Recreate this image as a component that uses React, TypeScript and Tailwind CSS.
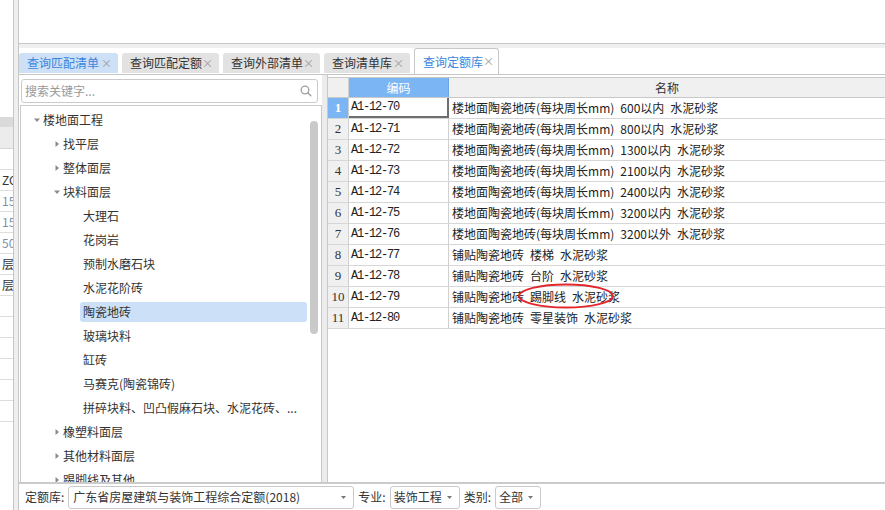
import React from "react";

const treeRows: { label: string; level: number; arrow?: "down" | "right"; selected?: boolean }[] = [
  { label: "楼地面工程", level: 0, arrow: "down" },
  { label: "找平层", level: 1, arrow: "right" },
  { label: "整体面层", level: 1, arrow: "right" },
  { label: "块料面层", level: 1, arrow: "down" },
  { label: "大理石", level: 2 },
  { label: "花岗岩", level: 2 },
  { label: "预制水磨石块", level: 2 },
  { label: "水泥花阶砖", level: 2 },
  { label: "陶瓷地砖", level: 2, selected: true },
  { label: "玻璃块料", level: 2 },
  { label: "缸砖", level: 2 },
  { label: "马赛克(陶瓷锦砖)", level: 2 },
  { label: "拼碎块料、凹凸假麻石块、水泥花砖、...", level: 2 },
  { label: "橡塑料面层", level: 1, arrow: "right" },
  { label: "其他材料面层", level: 1, arrow: "right" },
  { label: "踢脚线及其他", level: 1, arrow: "right" },
];

const gridRows: [string, string][] = [
  ["A1-12-70", "楼地面陶瓷地砖(每块周长mm)\u2002600以内\u2002水泥砂浆"],
  ["A1-12-71", "楼地面陶瓷地砖(每块周长mm)\u2002800以内\u2002水泥砂浆"],
  ["A1-12-72", "楼地面陶瓷地砖(每块周长mm)\u20021300以内\u2002水泥砂浆"],
  ["A1-12-73", "楼地面陶瓷地砖(每块周长mm)\u20022100以内\u2002水泥砂浆"],
  ["A1-12-74", "楼地面陶瓷地砖(每块周长mm)\u20022400以内\u2002水泥砂浆"],
  ["A1-12-75", "楼地面陶瓷地砖(每块周长mm)\u20023200以内\u2002水泥砂浆"],
  ["A1-12-76", "楼地面陶瓷地砖(每块周长mm)\u20023200以外\u2002水泥砂浆"],
  ["A1-12-77", "铺贴陶瓷地砖\u2002楼梯\u2002水泥砂浆"],
  ["A1-12-78", "铺贴陶瓷地砖\u2002台阶\u2002水泥砂浆"],
  ["A1-12-79", "铺贴陶瓷地砖\u2002踢脚线\u2002水泥砂浆"],
  ["A1-12-80", "铺贴陶瓷地砖\u2002零星装饰\u2002水泥砂浆"],
];

function Arrow({ dir }: { dir: "down" | "right" }) {
  return dir === "down" ? (
    <svg width="8" height="8" viewBox="0 0 8 8">
      <path d="M1 2.5 L7 2.5 L4 6 Z" fill="#8a8a8a" />
    </svg>
  ) : (
    <svg width="8" height="8" viewBox="0 0 8 8">
      <path d="M2.5 1 L6 4 L2.5 7 Z" fill="#8a8a8a" />
    </svg>
  );
}

function Caret() {
  return (
    <svg width="7" height="5" viewBox="0 0 7 5">
      <path d="M1 1 L6 1 L3.5 4 Z" fill="#777" />
    </svg>
  );
}

function Tab({
  label,
  w,
  variant,
}: {
  label: string;
  w: string;
  variant: "blue" | "gray" | "active";
}) {
  const cls =
    variant === "active"
      ? "h-[26px] bg-white border border-b-0 border-[#c8c8c8] text-[#3a86de]"
      : variant === "blue"
      ? "h-[20px] bg-[#cde0f6] text-[#3a86de]"
      : "h-[20px] bg-[#e2e2e2] text-[#333]";
  return (
    <div
      className={`${w} ${cls} shrink-0 whitespace-nowrap rounded-t-[3px] flex items-center justify-between pl-[8px] pr-[6px] text-[12px]`}
    >
      <span>{label}</span>
      <span className="text-[#9a9a9a] text-[11px]">×</span>
    </div>
  );
}

export default function App() {
  return (
    <div className="relative w-[885px] h-[510px] flex bg-[#efefef] overflow-hidden font-['Noto_Sans_CJK_SC',sans-serif] text-[#333]">
      {/* left strip */}
      <div className="w-[14px] shrink-0 h-full bg-white border-r border-[#c6c6c6] flex flex-col text-[12px] overflow-hidden">
        <div className="h-[117px]" />
        <div className="h-[10px] bg-[#dadada]" />
        <div className="h-[22px] bg-[#ececec] border-b border-[#d6d6d6]" />
        <div className="h-[21px] bg-white border-b border-[#dddddd]" />
        {["ZC", "15", "15", "50", "层", "层", "", "", "", "", "", ""].map((t, i) => (
          <div
            key={i}
            className={`h-[21px] border-b border-[#dddddd] pl-[2px] leading-[20px] whitespace-nowrap ${
              t === "15" || t === "50" ? "text-[#7d8fa3]" : "text-[#333]"
            }`}
          >
            {t}
          </div>
        ))}
      </div>
      <div className="w-[4px] shrink-0 h-full" />

      {/* main panel */}
      <div className="flex-1 min-w-0 h-full flex flex-col border-l border-[#c6c6c6] bg-white">
        <div className="h-[44px] shrink-0 bg-white border-b border-[#c6c6c6]" />
        <div className="h-[4px] shrink-0 bg-[#efefef]" />
        <div className="h-[27px] shrink-0 bg-white border-b border-[#c6c6c6] flex items-end gap-[4px]">
          <div className="mb-[1px] flex items-end gap-[4px] shrink-0">
            <Tab label="查询匹配清单" w="w-[99px]" variant="blue" />
            <Tab label="查询匹配定额" w="w-[97px]" variant="gray" />
            <Tab label="查询外部清单" w="w-[97px]" variant="gray" />
            <Tab label="查询清单库" w="w-[86px]" variant="gray" />
          </div>
          <Tab label="查询定额库" w="w-[85px]" variant="active" />
        </div>

        {/* content */}
        <div className="flex-1 flex min-h-0">
          {/* left tree panel */}
          <div className="w-[303px] shrink-0 flex flex-col min-h-0">
            <div className="mt-[4px] ml-[2px] mr-[4px] h-[24px] border border-[#cacaca] rounded-[3px] flex items-center justify-between pl-[3px] pr-[5px]">
              <span className="text-[12px] text-[#9a9a9a]">搜索关键字...</span>
              <svg width="12" height="12" viewBox="0 0 12 12">
                <circle cx="5" cy="5" r="3.8" fill="none" stroke="#a0a0a0" strokeWidth="1.3" />
                <path d="M7.8 7.8 L10.8 10.8" stroke="#a0a0a0" strokeWidth="1.4" strokeLinecap="round" />
              </svg>
            </div>
            <div className="mt-[2px] ml-[1px] flex-1 min-h-0 border-l border-t border-r border-[#cacaca] flex overflow-hidden">
              <div className="flex-1 pt-[2px] overflow-hidden">
                {treeRows.map((r, i) => {
                  if (r.level === 2) {
                    return (
                      <div key={i} className="h-[24px] flex items-center">
                        <div
                          className={`ml-[59px] mr-[2px] flex-1 h-[20px] px-[3px] rounded-[3px] flex items-center text-[12px] whitespace-nowrap ${
                            r.selected ? "bg-[#cce1f8]" : ""
                          }`}
                        >
                          {r.label}
                        </div>
                      </div>
                    );
                  }
                  return (
                    <div
                      key={i}
                      className={`h-[24px] flex items-center text-[12px] whitespace-nowrap ${
                        r.level === 0 ? "pl-[12px]" : "pl-[32px]"
                      }`}
                    >
                      <span className="w-[10px] flex items-center">{r.arrow && <Arrow dir={r.arrow} />}</span>
                      <span>{r.label}</span>
                    </div>
                  );
                })}
              </div>
              <div className="w-[12px] pt-[15px] pr-[2px] flex justify-center">
                <div className="w-[8px] h-[213px] rounded-full bg-[#c9c9c9]" />
              </div>
            </div>
          </div>

          {/* splitter */}
          <div className="w-[6px] shrink-0 bg-[#ececec] border-r border-[#c8c8c8]" />

          {/* grid */}
          <div className="flex-1 min-w-0 mt-[2px] border-t border-[#c8c8c8] flex flex-col min-h-0 overflow-hidden">
            <div className="h-[20px] shrink-0 flex border-b border-[#c8c8c8] text-[12px]">
              <div className="w-[21px] bg-[#f0f0f0] border-r border-[#d0d0d0]" />
              <div className="w-[100px] bg-[#7cb5f4] border-r border-[#6aa3e6] text-white flex items-center justify-center">
                编码
              </div>
              <div className="flex-1 bg-[#f0f0f0] flex items-center justify-center">名称</div>
            </div>
            {gridRows.map(([code, name], i) => (
              <div key={i} className="h-[21px] shrink-0 flex border-b border-[#d6d6d6]">
                <div
                  className={`w-[21px] border-r border-[#d0d0d0] flex items-center justify-center text-[13px] font-['Liberation_Serif',serif] ${
                    i === 0 ? "bg-[#7cb5f4] text-white font-bold" : "bg-[#f0f0f0] text-[#333]"
                  }`}
                >
                  {i + 1}
                </div>
                <div
                  className={`w-[100px] flex items-center pl-[2px] font-['Liberation_Mono',monospace] text-[12px] tracking-[-1.2px] text-[#222] ${
                    i === 0 ? "border-r-2 border-b-2 border-[#6e6e6e]" : "border-r border-[#d0d0d0]"
                  }`}
                >
                  {code}
                </div>
                <div className="flex-1 flex items-center pl-[3px] text-[12px] text-[#222] whitespace-nowrap">{name}</div>
              </div>
            ))}
          </div>
        </div>

        {/* bottom bar */}
        <div className="h-[28px] shrink-0 border-t-2 border-[#cbcbcb] bg-white flex items-center pl-[6px] gap-[4px] text-[12px] text-[#333]">
          <span>定额库:</span>
          <div className="w-[286px] h-[23px] border border-[#cacaca] rounded-[3px] flex items-center justify-between pl-[4px] pr-[6px]">
            <span>广东省房屋建筑与装饰工程综合定额(2018)</span>
            <Caret />
          </div>
          <span>专业:</span>
          <div className="w-[70px] h-[23px] border border-[#cacaca] rounded-[3px] flex items-center justify-between pl-[3px] pr-[6px]">
            <span>装饰工程</span>
            <Caret />
          </div>
          <span>类别:</span>
          <div className="w-[46px] h-[23px] border border-[#cacaca] rounded-[3px] flex items-center justify-between pl-[3px] pr-[6px]">
            <span>全部</span>
            <Caret />
          </div>
        </div>
      </div>

      {/* red annotation ellipse */}
      <svg className="absolute left-[516px] top-[282px]" width="100" height="28" viewBox="0 0 100 28">
        <ellipse cx="50" cy="14" rx="47" ry="11.5" fill="none" stroke="#e3262b" strokeWidth="2" />
      </svg>
    </div>
  );
}
